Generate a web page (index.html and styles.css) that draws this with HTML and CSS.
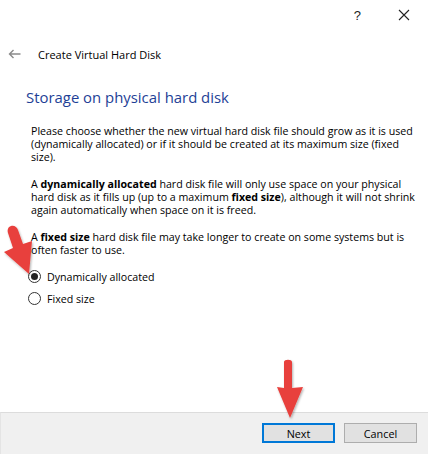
FILE: index.html
```html
<!DOCTYPE html>
<html>
<head>
<meta charset="utf-8">
<link rel="stylesheet" href="styles.css">
</head>
<body>
<div class="dialog">
  <div class="titlebar">
    <span class="help">?</span>
    <svg class="close" width="12" height="12" viewBox="0 0 12 12"><path d="M1 1L11 11M11 1L1 11" stroke="#222" stroke-width="1.1" fill="none"/></svg>
  </div>
  <div class="nav">
    <svg class="back" width="13" height="10" viewBox="0 0 13 10"><path d="M12.5 5H1.5M5.5 1L1.5 5L5.5 9" stroke="#8a8a8a" stroke-width="1.4" fill="none"/></svg>
    <span class="navtitle">Create Virtual Hard Disk</span>
  </div>
  <div class="content">
    <h1 class="heading">Storage on physical hard disk</h1>
    <p class="para">Please choose whether the new virtual hard disk file should grow as it is used<br>(dynamically allocated) or if it should be created at its maximum size (fixed<br>size).</p>
    <p class="para">A <b>dynamically allocated</b> hard disk file will only use space on your physical<br>hard disk as it fills up (up to a maximum <b>fixed size</b>), although it will not shrink<br>again automatically when space on it is freed.</p>
    <p class="para">A <b>fixed size</b> hard disk file may take longer to create on some systems but is<br>often faster to use.</p>
    <div class="options">
      <label class="radio"><span class="dot checked"></span>Dynamically allocated</label>
      <label class="radio"><span class="dot"></span>Fixed size</label>
    </div>
  </div>
  <div class="footer">
    <button class="btn primary">Next</button>
    <button class="btn">Cancel</button>
  </div>
  <svg class="arrow arrow-one" width="40" height="60" viewBox="0 0 40 60">
    <defs><filter id="sh" x="-30%" y="-30%" width="160%" height="160%"><feDropShadow dx="1" dy="1.5" stdDeviation="1.2" flood-color="#000" flood-opacity="0.3"/></filter></defs>
    <path d="M9 2 C12 1 15 3 16 6 L21 20 L30 17 L27 50 L2 28 L11 24 L6 9 C5 6 6 3 9 2Z" fill="#e8403c" filter="url(#sh)"/>
  </svg>
  <svg class="arrow arrow-two" width="40" height="64" viewBox="0 0 40 64">
    <path d="M14 4 C14 1 22 1 22 4 L22 30 L33 29 L20 60 L7 29 L14 30 Z" fill="#e8403c" filter="url(#sh)"/>
  </svg>
</div>
</body>
</html>
```
FILE: styles.css
```css
* { box-sizing: border-box; }
html, body { margin: 0; padding: 0; background: #fff; }
body { font-family: "Open Sans", "Noto Sans", sans-serif; font-size: 12px; color: #000; }
.dialog { position: relative; width: 428px; height: 454px; display: flex; flex-direction: column; overflow: hidden; }
.titlebar { height: 30px; display: flex; align-items: center; justify-content: flex-end; padding-right: 18px; gap: 37px; }
.help { font-family: "Liberation Sans", sans-serif; font-size: 13px; color: #222; }
.close { display: block; }
.nav { height: 26px; margin-top: 11px; display: flex; align-items: center; padding-left: 8px; }
.back { display: block; margin-right: 17px; }
.navtitle { font-size: 11px; color: #000; }
.content { padding-left: 26px; }
.heading { margin: 20px 0 0 0; font-size: 14.9px; font-weight: normal; color: #1e3f96; line-height: 20px; }
.para { margin: 18px 0 0 5px; line-height: 13px; white-space: nowrap; font-size: 10.65px; }
.para + .para { margin-top: 14px; }
.para b { font-weight: bold; }
.options { margin-top: 13px; display: flex; flex-direction: column; gap: 9px; margin-left: 2px; }
.radio { display: flex; align-items: center; height: 13px; font-size: 10.65px; }
.dot { width: 13px; height: 13px; border: 1px solid #333; border-radius: 50%; margin-right: 6px; display: flex; align-items: center; justify-content: center; background: #fff; }
.dot.checked::after { content: ""; width: 7px; height: 7px; border-radius: 50%; background: #222; }
.footer { margin-top: auto; height: 42px; background: #f0f0f0; border-top: 1px solid #dcdcdc; border-left: 1px solid #e4e4e4; display: flex; justify-content: flex-end; align-items: center; gap: 9px; padding: 0 11px 0 0; }
.btn { width: 73px; height: 20px; font-family: inherit; font-size: 10.8px; background: #e1e1e1; border: 1px solid #adadad; color: #000; padding: 0; margin-top: -1px; }
.btn.primary { border: 2px solid #0078d7; }
.arrow { position: absolute; }
.arrow-one { left: 2px; top: 224px; }
.arrow-two { left: 270px; top: 358px; }
```
